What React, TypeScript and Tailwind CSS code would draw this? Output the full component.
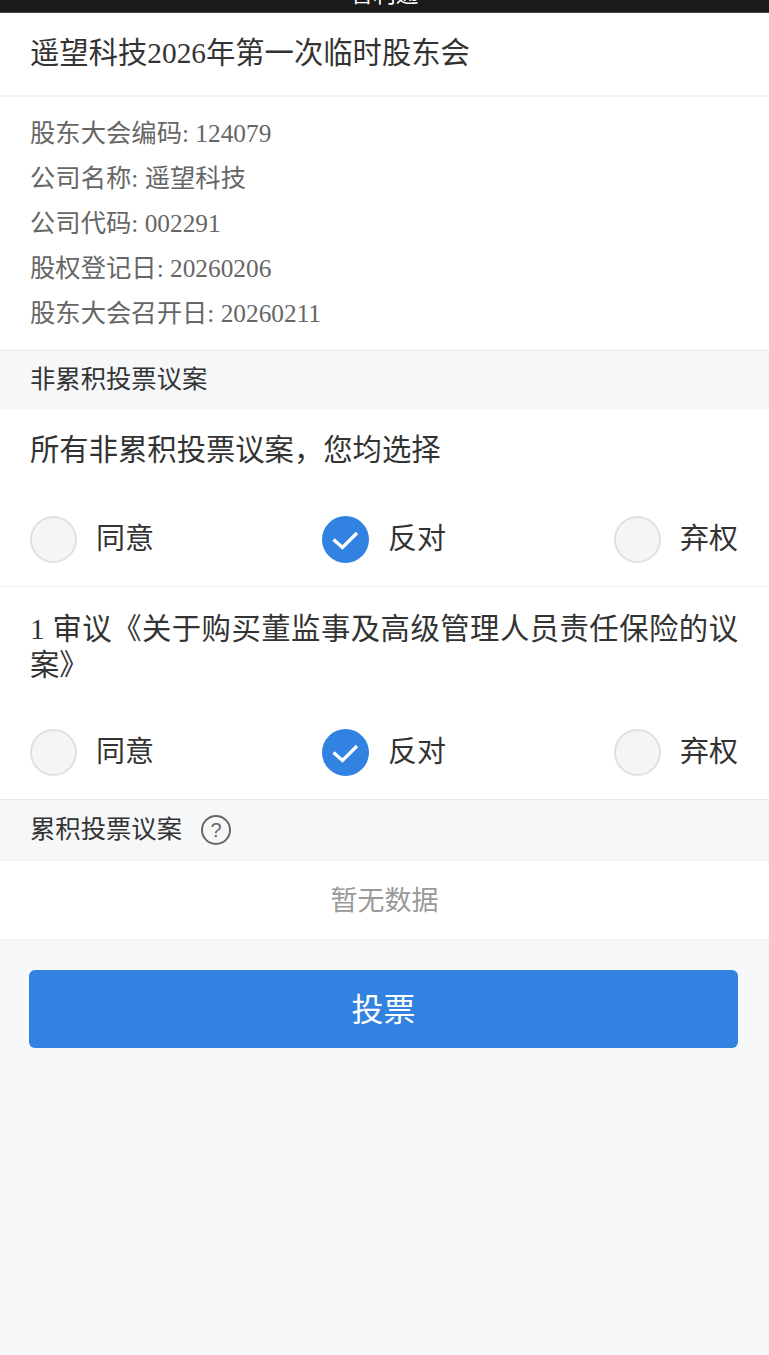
const cjk = { fontFamily: '"Liberation Serif", "Noto Sans CJK SC", sans-serif' };

function Radio({ label, checked }: { label: string; checked?: boolean }) {
  return (
    <div className="flex items-center gap-[19px]">
      {checked ? (
        <svg width="47" height="47" viewBox="0 0 47 47" className="block">
          <circle cx="23.5" cy="23.5" r="23.5" fill="#3282e2" />
          <path d="M11.5 23.5 L20.5 31.5 L35 17" fill="none" stroke="#fff" strokeWidth="3.4" />
        </svg>
      ) : (
        <div className="w-[47px] h-[47px] rounded-full bg-[#f5f5f5] border-2 border-[#e0e0e0]" />
      )}
      <span className="text-[29px] leading-[47px] text-[#333]">{label}</span>
    </div>
  );
}

function RadioRow() {
  return (
    <div className="flex justify-between">
      <Radio label="同意" />
      <Radio label="反对" checked />
      <Radio label="弃权" />
    </div>
  );
}

export default function App() {
  return (
    <div className="min-h-[1355px] bg-[#f8f8fa] overflow-hidden" style={cjk}>
      {/* Header */}
      <div className="h-[13px] bg-[#1b1b1b] overflow-hidden border-b border-[#444] flex justify-center">
        <span className="text-[22.5px] leading-[22px] text-white -mt-[16px]">普利通</span>
      </div>

      <div className="bg-white h-[84px] pl-[30px] border-b-2 border-[#f3f3f3]">
        <p className="text-[29.33px] leading-[81px] text-[#333]">遥望科技2026年第一次临时股东会</p>
      </div>

      {/* Meeting info */}
      <div className="bg-white pl-[30px] pt-[14px] pb-[14px] text-[25.33px] leading-[45px] text-[#666]">
        <p>股东大会编码: 124079</p>
        <p>公司名称: 遥望科技</p>
        <p>公司代码: 002291</p>
        <p>股权登记日: 20260206</p>
        <p>股东大会召开日: 20260211</p>
      </div>

      <div className="h-[59px] bg-[#f6f7f9] border-t border-[#e9e9e9] pl-[30px] text-[25.33px] leading-[57px] text-[#333]">
        非累积投票议案
      </div>

      <div className="bg-white pl-[30px] pr-[31px] pt-[20px] pb-[23px] border-b border-[#eeeeee]">
        <p className="text-[29.33px] leading-[42px] text-[#333] mb-[45px]">所有非累积投票议案，您均选择</p>
        <RadioRow />
      </div>

      <div className="bg-white pl-[30px] pr-[31px] pt-[24px] pb-[23px]">
        <p className="text-[29.33px] leading-[36px] text-[#333] mb-[46px] text-justify">
          1 审议《关于购买董监事及高级管理人员责任保险的议案》
        </p>
        <RadioRow />
      </div>

      <div className="h-[61px] bg-[#f6f7f9] border-t border-[#e9e9e9] pl-[30px] flex items-center gap-[19px] text-[25.33px] text-[#333]">
        <span>累积投票议案</span>
        <span className="w-[30px] h-[30px] rounded-full border-2 border-[#666] text-[#666] text-[20px] leading-[26px] text-center font-['Liberation_Sans']">?</span>
      </div>

      <div className="bg-white h-[80px] border-y border-[#f0f0f0] text-center text-[27px] leading-[80px] text-[#999]">
        暂无数据
      </div>

      <div className="pl-[29px] pr-[31px] pt-[30px]">
        <button className="w-full h-[78px] rounded-[6px] bg-[#3282e2] text-white text-[32px] pt-[1px]">投票</button>
      </div>
    </div>
  );
}
